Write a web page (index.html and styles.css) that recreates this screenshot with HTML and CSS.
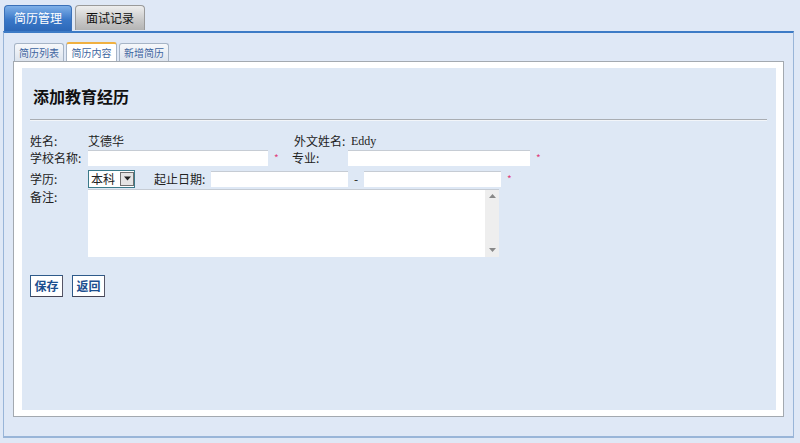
FILE: index.html
```html
<!DOCTYPE html>
<html>
<head>
<meta charset="utf-8">
<link rel="stylesheet" href="styles.css">
</head>
<body>
<div class="tabs">
  <div class="tab tab-active">简历管理</div>
  <div class="tab tab-gray">面试记录</div>
</div>
<div class="panel">
  <div class="subtabs">
    <div class="subtab">简历列表</div>
    <div class="subtab subtab-active">简历内容</div>
    <div class="subtab">新增简历</div>
  </div>
  <div class="box">
    <div class="inner">
      <h1 class="title">添加教育经历</h1>
      <div class="rule"></div>
      <div class="form">
        <div class="row r1">
          <span class="lbl w1">姓名:</span><span class="val c1">艾德华</span>
          <span class="lbl w2">外文姓名:</span><span class="val en">Eddy</span>
        </div>
        <div class="row r2">
          <span class="lbl w1">学校名称:</span><span class="inp i1"></span><span class="star">*</span>
          <span class="lbl w3">专业:</span><span class="inp i2"></span><span class="star">*</span>
        </div>
        <div class="row r3">
          <span class="lbl w4">学历:</span>
          <span class="sel"><span class="sel-text">本科</span><span class="sel-btn"><svg width="9" height="5" viewBox="0 0 9 5"><path d="M1 0.5h7L4.5 4.5z" fill="#222"/></svg></span></span>
          <span class="lbl w5">起止日期:</span><span class="inp i3"></span><span class="dash">-</span><span class="inp i4"></span><span class="star">*</span>
        </div>
        <div class="row r4">
          <span class="lbl w1">备注:</span>
          <span class="ta"><span class="scroll"><svg width="7" height="4" viewBox="0 0 7 4"><path d="M0 4L3.5 0L7 4z" fill="#888"/></svg><svg width="7" height="4" viewBox="0 0 7 4"><path d="M0 0L3.5 4L7 0z" fill="#888"/></svg></span></span>
        </div>
      </div>
      <div class="buttons">
        <span class="btn">保存</span>
        <span class="btn">返回</span>
      </div>
    </div>
  </div>
</div>
</body>
</html>
```
FILE: styles.css
```css
html, body {
  margin: 0;
  padding: 0;
  background: #dfe8f6;
  font-family: "Noto Sans CJK SC", "DejaVu Sans", sans-serif;
  font-size: 12px;
  color: #222;
}
.tabs {
  display: flex;
  padding: 5px 0 0 4px;
  height: 26px;
  gap: 3px;
}
.tab {
  height: 25px;
  line-height: 23px;
  width: 68px;
  text-align: center;
  border-radius: 4px 4px 0 0;
  font-size: 12px;
  box-sizing: border-box;
}
.tab-active {
  background: linear-gradient(#7fb0e8, #3a78c8 55%, #2c68b8);
  color: #fff;
  border: 1px solid #3a70b8;
  border-bottom: none;
  height: 26px;
}
.tab-gray {
  background: linear-gradient(#eeeeee, #c8c8c8 60%, #b4b4b4);
  color: #111;
  border: 1px solid #9a9a9a;
  border-bottom: none;
  width: 70px;
}
.panel {
  margin: 0 6px 0 3px;
  height: 394px;
  border-top: 2px solid #3d7bc6;
  border-left: 1px solid #99b5d8;
  border-right: 1px solid #99b5d8;
  border-bottom: 2px solid #99b5d8;
  padding: 9px 9px 0 9px;
}
.subtabs {
  display: flex;
  gap: 2px;
  height: 19px;
  padding-left: 1px;
}
.subtab {
  width: 50px;
  height: 18px;
  margin-top: 1px;
  box-sizing: border-box;
  border: 1px solid #a6b4c6;
  border-bottom: none;
  border-radius: 3px 3px 0 0;
  background: linear-gradient(#f6f8fb, #dde4ee);
  color: #3d64a0;
  font-size: 10px;
  line-height: 17px;
  text-align: center;
}
.subtab-active {
  background: #fff;
  border-top: 2px solid #f0b040;
  margin-top: 0;
  height: 19px;
  width: 51px;
}
.box {
  height: 356px;
  box-sizing: border-box;
  border: 1px solid #a3a9b0;
  background: #fff;
  padding: 6px 7px 6px 8px;
}
.inner {
  height: 100%;
  background: #dee8f5;
  padding: 0 9px 0 8px;
  box-sizing: border-box;
  overflow: hidden;
}
.title {
  margin: 0;
  padding-top: 18px;
  padding-left: 3px;
  font-size: 16px;
  font-weight: bold;
  line-height: 20px;
  color: #111;
}
.rule {
  margin-top: 13px;
  height: 1px;
  background: #a9adb2;
  border-bottom: 1px solid #f2f5f9;
}
.form {
  padding-top: 12px;
  line-height: 14px;
}
.row {
  display: flex;
  align-items: center;
}
.r1 { height: 16px; }
.r2 { height: 18px; }
.r3 { height: 19px; margin-top: 2px; }
.r4 { align-items: flex-start; margin-top: 1px; }
.lbl { flex: none; }
.w1 { width: 58px; }
.w2 { width: 57px; }
.w3 { width: 56px; }
.w4 { width: 58px; }
.w5 { width: 57px; margin-left: 19px; }
.c1 { width: 206px; }
.en { font-family: "Liberation Serif", serif; font-size: 12px; }
.r4 .lbl { padding-top: 1px; }
.inp {
  display: block;
  height: 16px;
  background: #fff;
  border-top: 1px solid #c6ccd4;
  box-sizing: border-box;
}
.i1 { width: 180px; }
.i2 { width: 182px; }
.i3 { width: 137px; }
.i4 { width: 137px; }
.star {
  color: #e0407a;
  width: 24px;
  padding-left: 6px;
  box-sizing: border-box;
  font-size: 10px;
  flex: none;
}
.dash { width: 16px; text-align: center; }
.sel {
  display: flex;
  width: 47px;
  height: 18px;
  box-sizing: border-box;
  border: 1px solid #3b7a8a;
  background: #fff;
}
.sel-text { width: 30px; padding-left: 2px; line-height: 16px; }
.sel-btn {
  width: 14px;
  height: 14px;
  margin-top: 1px;
  background: #e4e4e4;
  border: 1px solid #707070;
  box-sizing: border-box;
  display: flex;
  align-items: center;
  justify-content: center;
}
.ta {
  display: flex;
  justify-content: flex-end;
  width: 411px;
  height: 68px;
  background: #fff;
  border-top: 1px solid #c6ccd4;
  box-sizing: border-box;
}
.scroll {
  width: 14px;
  background: #eeeeee;
  display: flex;
  flex-direction: column;
  justify-content: space-between;
  align-items: center;
  padding: 4px 0 5px;
  box-sizing: border-box;
}
.buttons {
  display: flex;
  gap: 9px;
  padding-top: 18px;
}
.btn {
  width: 33px;
  height: 22px;
  box-sizing: border-box;
  border: 1px solid #2e5a8a;
  border-right-color: #556;
  border-bottom-color: #445;
  background: #fff;
  color: #1c4f8f;
  font-weight: bold;
  font-size: 12px;
  line-height: 20px;
  text-align: center;
}
```
